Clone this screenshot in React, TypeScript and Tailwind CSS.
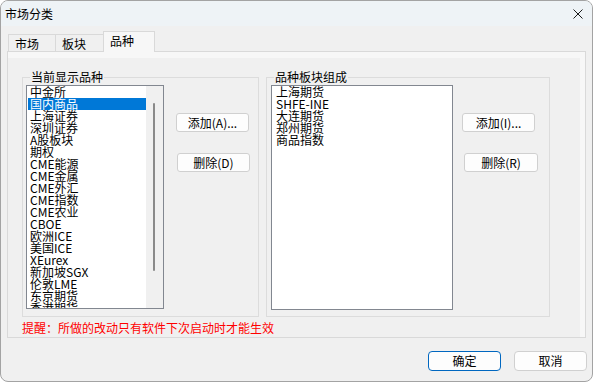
import React from "react";

const leftItems = [
  "中金所",
  "国内商品",
  "上海证券",
  "深圳证券",
  "A股板块",
  "期权",
  "CME能源",
  "CME金属",
  "CME外汇",
  "CME指数",
  "CME农业",
  "CBOE",
  "欧洲ICE",
  "美国ICE",
  "XEurex",
  "新加坡SGX",
  "伦敦LME",
  "东京期货",
  "香港期货",
];

const rightItems = ["上海期货", "SHFE-INE", "大连期货", "郑州期货", "商品指数"];

function Btn({ label, className = "" }: { label: string; className?: string }) {
  return (
    <div
      className={
        "w-[73px] h-[19px] border border-[#d0d0d0] rounded-[3px] bg-[#fdfdfd] text-[12px] leading-[12px] flex items-center justify-center text-black " +
        className
      }
    >
      {label}
    </div>
  );
}

export default function App() {
  return (
    <div className="w-[593px] h-[383px] bg-white font-['Noto_Sans_CJK_SC',sans-serif] text-black">
      <div className="w-[593px] h-[382px] border border-[#a3a3a3] rounded-[8px] overflow-hidden flex flex-col bg-[#f0f0f0]">
        {/* Title bar */}
        <div className="h-[25px] shrink-0 bg-[#eef3f6] flex items-center justify-between pl-[4px] pr-[9px]">
          <span className="text-[12px] leading-[12px]">市场分类</span>
          <svg width="10" height="10" viewBox="0 0 10 10">
            <path d="M0.5 0.5 L9.5 9.5 M9.5 0.5 L0.5 9.5" stroke="#1a1a1a" strokeWidth="1" fill="none" />
          </svg>
        </div>

        {/* Tabs */}
        <div className="mt-[5px] h-[20px] flex items-end pl-[7px] text-[12px] leading-[12px]">
          <div className="w-[48px] h-[17px] border border-b-0 border-[#d9d9d9] pl-[6px] pt-[3px]">市场</div>
          <div className="-ml-px w-[49px] h-[17px] border border-b-0 border-[#d9d9d9] pl-[6px] pt-[3px]">板块</div>
          <div className="-ml-px -mb-px relative z-10 w-[52px] h-[21px] border border-b-0 border-[#d9d9d9] bg-[#f7f7f7] pl-[6px] pt-[3px]">
            品种
          </div>
        </div>

        {/* Panel */}
        <div className="ml-[6px] w-[579px] h-[287px] shrink-0 border border-[#d9d9d9] shadow-[inset_-5px_6px_0_#f7f7f7] flex flex-col pl-[14px] pt-[25px]">
          <div className="flex gap-[7px]">
            {/* Group 1 */}
            <div className="relative w-[237px] h-[240px] border border-[#dcdcdc] flex pl-[3px] pt-[7px]">
              <span className="absolute left-[7px] top-[-7px] px-[1px] bg-[#f0f0f0] text-[12px] leading-[12px]">
                当前显示品种
              </span>
              <div className="w-[138px] h-[224px] border border-[#828790] bg-white flex overflow-hidden">
                <div className="w-[119px] pl-px flex flex-col overflow-hidden">
                  {leftItems.map((it, i) => (
                    <div
                      key={it}
                      className={
                        "h-[12px] shrink-0 leading-[12px] pl-[2px] whitespace-nowrap text-[12px] " +
                        (i === 1 ? "bg-[#0078d7] text-white" : "")
                      }
                    >
                      {it}
                    </div>
                  ))}
                </div>
                <div className="w-[17px] h-full bg-[#f0f0f0]">
                  <div className="ml-[7px] mt-[17px] w-[2px] h-[168px] bg-[#8a8a8a] rounded-full" />
                </div>
              </div>
              <div className="ml-[12px] flex flex-col pt-[28px]">
                <Btn label="添加(A)..." />
                <Btn label="删除(D)" className="ml-[1px] mt-[21px]" />
              </div>
            </div>

            {/* Group 2 */}
            <div className="relative w-[284px] h-[240px] border border-[#dcdcdc] flex pl-[4px] pt-[7px]">
              <span className="absolute left-[7px] top-[-7px] px-[1px] bg-[#f0f0f0] text-[12px] leading-[12px]">
                品种板块组成
              </span>
              <div className="w-[182px] h-[225px] border border-[#828790] bg-white flex flex-col pl-[4px] overflow-hidden">
                {rightItems.map((it) => (
                  <div key={it} className="h-[12px] shrink-0 leading-[12px] whitespace-nowrap text-[12px]">
                    {it}
                  </div>
                ))}
              </div>
              <div className="ml-[9px] flex flex-col pt-[28px]">
                <Btn label="添加(I)..." />
                <Btn label="删除(R)" className="ml-[2px] mt-[21px] w-[74px]" />
              </div>
            </div>
          </div>

          <div className="mt-[5px] text-[12px] leading-[12px] text-[#ff0000]">
            提醒：所做的改动只有软件下次启动时才能生效
          </div>
        </div>

        {/* Bottom buttons */}
        <div className="mt-[13px] flex justify-end gap-[13px] pr-[5px]">
          <div className="w-[73px] h-[20px] rounded-[4px] border border-[#0067c0] bg-[#fdfdfd] text-[12px] leading-[12px] flex items-center justify-center">
            确定
          </div>
          <div className="w-[73px] h-[20px] rounded-[4px] border border-[#d0d0d0] bg-[#fdfdfd] text-[12px] leading-[12px] flex items-center justify-center">
            取消
          </div>
        </div>
      </div>
    </div>
  );
}
